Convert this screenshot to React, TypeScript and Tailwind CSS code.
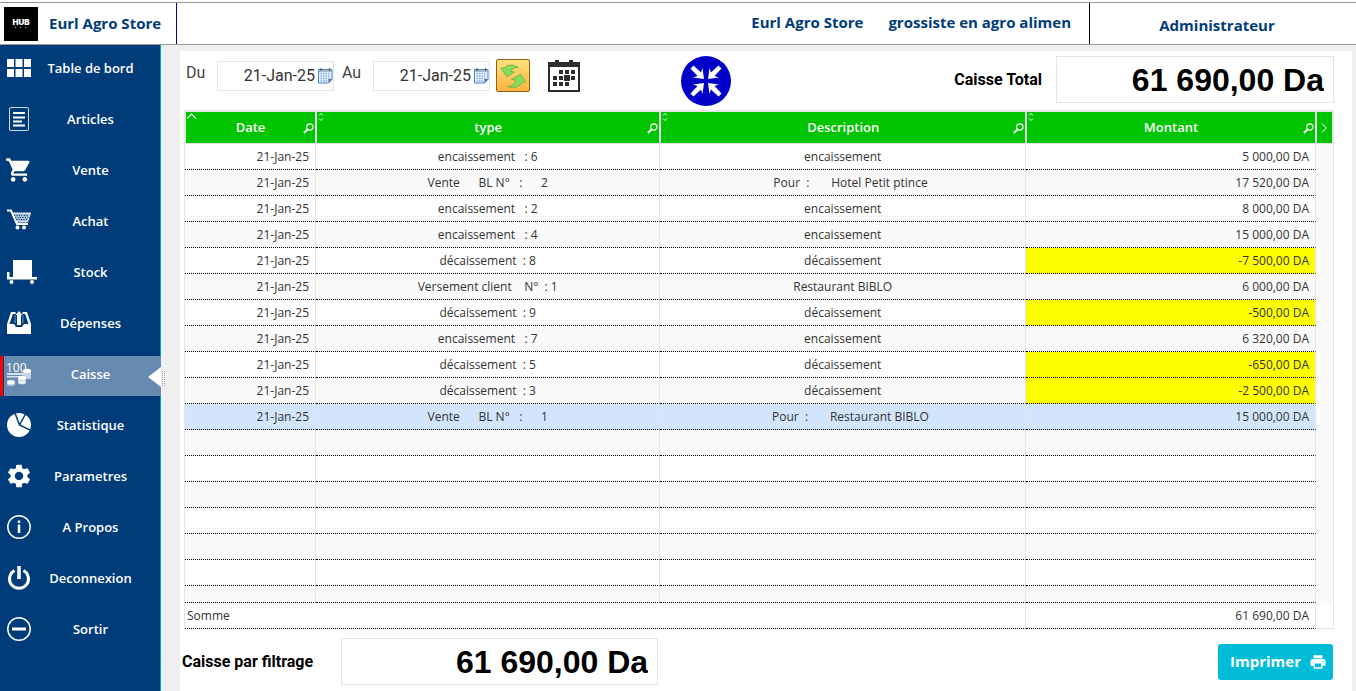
import type { ReactNode } from "react";
import { MdSettings, MdShoppingCart, MdPrint } from "react-icons/md";

type Row = { type: string; description: string; amount: string; negative?: boolean; selected?: boolean };

const rows: Row[] = [
  { type: "encaissement   : 6", description: "encaissement", amount: "5 000,00 DA" },
  { type: "Vente      BL N°   :      2", description: "     Pour  :       Hotel Petit ptince", amount: "17 520,00 DA" },
  { type: "encaissement   : 2", description: "encaissement", amount: "8 000,00 DA" },
  { type: "encaissement   : 4", description: "encaissement", amount: "15 000,00 DA" },
  { type: "décaissement  : 8", description: "décaissement", amount: "-7 500,00 DA", negative: true },
  { type: "Versement client    N°  : 1", description: "Restaurant BIBLO", amount: "6 000,00 DA" },
  { type: "décaissement  : 9", description: "décaissement", amount: "-500,00 DA", negative: true },
  { type: "encaissement   : 7", description: "encaissement", amount: "6 320,00 DA" },
  { type: "décaissement  : 5", description: "décaissement", amount: "-650,00 DA", negative: true },
  { type: "décaissement  : 3", description: "décaissement", amount: "-2 500,00 DA", negative: true },
  { type: "Vente      BL N°   :      1", description: "     Pour  :       Restaurant BIBLO", amount: "15 000,00 DA", selected: true },
];

const emptyRows = [0, 1, 2, 3, 4, 5];

function GridIcon() {
  return (
    <svg width="24" height="24" viewBox="0 0 24 24" fill="#fff">
      <path d="M0 3h7v8H0zM8.500 3h7v8h-7zM17 3h7v8h-7zM0 13h7v8H0zM8.500 13h7v8h-7zM17 13h7v8h-7z" />
    </svg>
  );
}

function ArticleIcon() {
  return (
    <svg width="24" height="24" viewBox="0 0 24 24" fill="none" stroke="#fff">
      <rect x="2.500" y="0.500" width="19" height="23" rx="1.500" strokeOpacity="0.8" />
      <path d="M6 6h12M6 10.500h12M6 14.500h9M6 18.500h12" strokeWidth="2" />
    </svg>
  );
}

function BasketIcon() {
  return (
    <svg width="24" height="24" viewBox="0 0 24 24" fill="none" stroke="#fff">
      <path d="M0 1.500h4l6 13.500h11" strokeWidth="2" />
      <path d="M5 4h18.500l-3 9H9z" fill="#fff" fillOpacity="0.65" strokeOpacity="0.9" />
      <path d="M7 6.500h15M8 8.500h14M9 10.500h12" stroke="#003c79" strokeDasharray="1 1.500" />
      <circle cx="10.500" cy="18.500" r="2" fill="#fff" stroke="none" />
      <circle cx="17" cy="18.500" r="2" fill="#fff" stroke="none" />
    </svg>
  );
}

function TrolleyIcon() {
  return (
    <svg width="30" height="24" viewBox="0 0 30 24" fill="#fff">
      <path d="M6 0h19v17H6z" />
      <path d="M0 12h2.500v5H30v2.500H0z" />
      <circle cx="4.500" cy="22" r="2" />
      <circle cx="25" cy="22" r="2" />
    </svg>
  );
}

function TrayIcon() {
  return (
    <svg width="24" height="24" viewBox="0 0 24 24" fill="#fff">
      <path d="M4 1h4.500v2H5.800L2.500 13H7l2 3h6l2-3h4.500L18.200 3H15.500V1H20l4 12v10H0V13z" />
      <path d="M12 0l3.500 4H14v10h-4V4H8.500z" />
      <path d="M7.500 4H9v8H7zM15 4h1.500l.5 8h-2z" opacity="0.25" />
    </svg>
  );
}

function CoinsIcon() {
  return (
    <svg width="26" height="26" viewBox="0 0 26 26" fill="#fff" className="overflow-visible">
      <text x="-1" y="11" fontSize="12" className="font-['Open_Sans',sans-serif] font-normal">100</text>
      <path d="M0 12h16v2H0zM0 15h13v1.500H0z" opacity="0.75" />
      <path d="M16 10h8v8h-8z" opacity="0.6" />
      <ellipse cx="20" cy="10" rx="4" ry="2.200" />
      <path d="M11 17h8v4.500h-8z" opacity="0.6" />
      <ellipse cx="15" cy="17" rx="4" ry="2.200" />
      <ellipse cx="15" cy="21.500" rx="4" ry="1.800" opacity="0.8" />
      <ellipse cx="4" cy="22.500" rx="4" ry="2.500" opacity="0.6" />
      <ellipse cx="4" cy="21" rx="4" ry="2" />
    </svg>
  );
}

function PieIcon() {
  return (
    <svg width="24" height="24" viewBox="0 0 24 24">
      <circle cx="12" cy="12" r="12" fill="#fff" />
      <path d="M8 0l4.500 12L24 17.500M12.500 12L18.500 1" stroke="#003c79" strokeWidth="1.500" fill="none" />
    </svg>
  );
}

function InfoIcon() {
  return (
    <svg width="24" height="24" viewBox="0 0 24 24" fill="none" stroke="#fff">
      <circle cx="12" cy="12" r="11.200" strokeWidth="1.500" />
      <path d="M12 9.500V18M12 5.500v2.500" strokeWidth="2.500" />
    </svg>
  );
}

function PowerIcon() {
  return (
    <svg width="24" height="24" viewBox="0 0 24 24" fill="none" stroke="#fff" strokeWidth="3">
      <path d="M7.500 4.500a9.500 9.500 0 1 0 9 0" />
      <path d="M12 0v13" strokeWidth="3.500" />
    </svg>
  );
}

function MinusIcon() {
  return (
    <svg width="24" height="24" viewBox="0 0 24 24" fill="none" stroke="#fff">
      <circle cx="12" cy="12" r="11.200" strokeWidth="1.500" />
      <path d="M5 12h14" strokeWidth="3" />
    </svg>
  );
}

const menu: { label: string; icon: ReactNode; active?: boolean }[] = [
  { label: "Table de bord", icon: <GridIcon /> },
  { label: "Articles", icon: <ArticleIcon /> },
  { label: "Vente", icon: <MdShoppingCart className="-ml-0.5 size-7" /> },
  { label: "Achat", icon: <BasketIcon /> },
  { label: "Stock", icon: <TrolleyIcon /> },
  { label: "Dépenses", icon: <TrayIcon /> },
  { label: "Caisse", icon: <CoinsIcon />, active: true },
  { label: "Statistique", icon: <PieIcon /> },
  { label: "Parametres", icon: <MdSettings className="-ml-0.5 size-7" /> },
  { label: "A Propos", icon: <InfoIcon /> },
  { label: "Deconnexion", icon: <PowerIcon /> },
  { label: "Sortir", icon: <MinusIcon /> },
];

function SmallCalendarIcon() {
  return (
    <svg width="15" height="17" viewBox="0 0 15 17" fill="none">
      <path d="M.5 2.500h13.500v10L10.500 16H.5z" fill="#eaf3fd" stroke="#4484bd" />
      <path d="M1 4h12.500" stroke="#6c7f93" />
      <path d="M3 1v3M11.500 1v3" stroke="#555" />
      <path d="M2.500 6.500h10M2.500 9h10M2.500 11.500h10M2.500 14h7" stroke="#7ba9ea" strokeWidth="1.300" strokeDasharray="1.500 1" />
      <path d="M10.500 16v-4H14z" fill="#3b6f9e" />
    </svg>
  );
}

function RefreshIcon() {
  return (
    <svg width="28" height="28" viewBox="0 0 28 28" stroke="#4aa53a" strokeWidth="0.600" fill="#86dc5c">
      <path d="M2 6.500L6 5.500C9 2.500 14 2 19.500 5.500C16 5 13.500 6.500 12 9.500L15.500 10L8 15z" />
      <path d="M26.500 20L23 21C19.500 25.500 13.500 27 8.500 24.500C13 24.500 16 22 17 18L12.500 17.500L21.500 12z" />
    </svg>
  );
}

function CalendarIcon() {
  return (
    <svg width="32" height="32" viewBox="0 0 32 32" fill="#2d2d2d">
      <path d="M0 2h32v30H0zM2 7v23h28V7z" fillRule="evenodd" />
      <path d="M7 0h4v6H7zM21 0h4v6h-4z" />
      <path d="M11 10h4v4h-4zM17 10h4v4h-4zM23 10h4v4h-4zM5 16h4v4H5zM11 16h4v4h-4zM16 15h6v6h-6zM23 16h4v4h-4zM5 22h4v4H5zM11 22h4v4h-4zM17 22h4v4h-4z" />
    </svg>
  );
}

function CollapseIcon() {
  return (
    <svg width="50" height="50" viewBox="0 0 50 50">
      <circle cx="25" cy="25" r="25" fill="#0000c8" />
      <g fill="#fff">
        {["rotate(0 25 25)", "rotate(90 25 25)", "rotate(180 25 25)", "rotate(270 25 25)"].map((turn) => (
          <path key={turn} transform={turn} d="M9.500 12.500l3-3 7.500 7 1.500-4.500 1.500 11-11-1.500 4.500-1.500z" />
        ))}
      </g>
    </svg>
  );
}

function SearchIcon() {
  return (
    <svg width="11" height="11" viewBox="0 0 11 11" fill="none" stroke="#fff">
      <circle cx="6.800" cy="4" r="3.200" strokeWidth="1.200" />
      <path d="M4.500 6.500L0.800 10" strokeWidth="1.800" />
    </svg>
  );
}

function HeaderCell({ label, sorted }: { label: string; sorted?: boolean }) {
  return (
    <th className="relative h-[34px] border-x border-t-2 border-b border-[#e5e5e5] bg-[#00c400] p-0 text-[13px] font-semibold text-white">
      <span>{label}</span>
      <button type="button" aria-label={`Trier ${label}`} className="absolute top-0 left-0 flex p-px">
        {sorted ? (
          <svg width="10" height="7" viewBox="0 0 10 7" fill="none" stroke="#fff" strokeWidth="1.200">
            <path d="M0 5.500L4.500 1L9 5.500" />
          </svg>
        ) : (
          <svg width="6" height="8" viewBox="0 0 6 8" fill="none" stroke="#fff" strokeWidth="0.900">
            <path d="M1 2.500L3 .5l2 2M1 5.500l2 2 2-2" />
          </svg>
        )}
      </button>
      <button type="button" aria-label={`Rechercher ${label}`} className="absolute right-px bottom-[9px] flex">
        <SearchIcon />
      </button>
    </th>
  );
}

function DateField({ id, label }: { id: string; label: string }) {
  return (
    <div className="flex items-center">
      <label htmlFor={id} className="w-[31px] pb-1.5 text-[#444]">{label}</label>
      <div className="flex h-[30px] w-[117px] items-center border border-[#e5e5e5]">
        <input id={id} type="text" defaultValue="21-Jan-25" className="min-w-0 flex-1 text-right text-[#333] outline-none" />
        <button type="button" aria-label={`Choisir ${label}`} className="ml-[3px] flex">
          <SmallCalendarIcon />
        </button>
      </div>
    </div>
  );
}

function Total({ id, label, className }: { id: string; label: string; className: string }) {
  return (
    <>
      <label htmlFor={id} className="shrink-0 font-bold text-black">{label}</label>
      <input
        id={id}
        type="text"
        readOnly
        value="61 690,00 Da"
        className={`h-[47px] border border-[#e5e5e5] pr-[9px] text-right font-['Liberation_Sans',sans-serif] text-[32px] font-bold text-black outline-none ${className}`}
      />
    </>
  );
}

const cell = "h-[26px] border-r border-b border-r-[#e5e5e5] [border-bottom-style:dotted] border-b-black p-0 whitespace-pre";

export default function App() {
  return (
    <div className="flex min-h-screen flex-col bg-[#efefef] font-['Open_Sans','Noto_Sans',sans-serif] text-[#333]">
      <header className="bg-white pt-0.5">
        <div className="flex h-[43px] border-y border-[#999] text-[15px] font-bold text-[#003c79]">
          <div className="flex w-[177px] items-center border-r border-[#0000b4] pl-1">
            <div className="flex size-[34px] flex-col items-center justify-center bg-black text-white">
              <span className="font-['Inter',sans-serif] text-[8px] leading-2 font-black">HUB</span>
              <svg width="14" height="3" viewBox="0 0 14 3" fill="#bbb">
                <path d="M1 1h1v1H1zM6 1h1v1H6zM11 1h1v1h-1z" />
              </svg>
            </div>
            <span className="pl-[11px]">Eurl Agro Store</span>
          </div>
          <div className="flex flex-1 items-center justify-end gap-[25px] border-r border-black pr-[18px] pb-0.5">
            <span>Eurl Agro Store</span>
            <span>grossiste en agro alimen</span>
          </div>
          <div className="flex w-[266px] items-center justify-center pt-1 pr-3">Administrateur</div>
        </div>
      </header>

      <div className="flex flex-1">
        <nav className="flex w-[161px] shrink-0 flex-col gap-[11px] border-r border-[#00a5a5] bg-[#003c79] pt-[5px] text-white">
          {menu.map((item) => (
            <a
              key={item.label}
              href="#"
              className={`relative -mr-px flex h-10 items-center text-[13px] font-semibold ${item.active ? "ml-1 bg-[#668ab0] pl-[3px]" : "pl-[7px]"}`}
            >
              {item.active && <span className="absolute inset-y-0 -left-1 w-[3px] bg-[#ff0000]" />}
              <span className="w-[30px] shrink-0 pb-1">{item.icon}</span>
              <span className="w-[107px] pb-0.5 text-center">{item.label}</span>
              {item.active && (
                <svg width="18" height="20" viewBox="0 0 18 20" className="absolute top-[11px] -right-[5px]">
                  <path d="M0 10L13 0v20z" fill="#fff" />
                  <path d="M14.500 4v15M16.500 4v15" stroke="#aaa" strokeDasharray="1 1" />
                </svg>
              )}
            </a>
          ))}
        </nav>

        <main className="mt-1.5 mr-1 ml-[19px] flex-1 bg-white pr-[18px] pl-1">
          <div className="flex h-[59px] items-center pl-0.5 font-['Roboto',sans-serif] text-base">
            <div className="flex items-center pb-2.5">
              <DateField id="du" label="Du" />
              <div className="w-2" />
              <DateField id="au" label="Au" />
              <button type="button" aria-label="Actualiser" className="ml-1.5 flex h-[33px] w-[34px] items-center justify-center rounded-xs border border-[#8a6414] bg-gradient-to-b from-[#ffe07a] to-[#ffb23e]">
                <RefreshIcon />
              </button>
              <button type="button" aria-label="Calendrier" className="ml-[18px]">
                <CalendarIcon />
              </button>
            </div>
            <button type="button" aria-label="Réduire" className="ml-[101px]">
              <CollapseIcon />
            </button>
            <div className="ml-auto flex items-center gap-3.5 pb-0.5">
              <Total id="total" label="Caisse Total" className="w-[278px]" />
            </div>
          </div>

          <table className="w-full table-fixed border-separate border-spacing-0 border-x border-[#e5e5e5] text-xs">
            <colgroup>
              <col className="w-[131px]" />
              <col className="w-[30%]" />
              <col />
              <col className="w-[290px]" />
              <col className="w-[17px]" />
            </colgroup>
            <thead>
              <tr>
                <HeaderCell label="Date" sorted />
                <HeaderCell label="type" />
                <HeaderCell label="Description" />
                <HeaderCell label="Montant" />
                <th className="border-x border-t-2 border-b border-[#e5e5e5] bg-[#00c400] p-0">
                  <button type="button" aria-label="Suite" className="flex w-full justify-center">
                    <svg width="7" height="10" viewBox="0 0 7 10" fill="none" stroke="#fff">
                      <path d="M1 .5L5.500 5L1 9.500" />
                    </svg>
                  </button>
                </th>
              </tr>
            </thead>
            <tbody>
              {rows.map((row, i) => (
                <tr key={i} className={row.selected ? "bg-[#d2e5fd]" : i % 2 ? "bg-[#fafafa]" : "bg-white"}>
                  <td className={`${cell} pr-1.5 text-right`}>21-Jan-25</td>
                  <td className={`${cell} text-center`}>{row.type}</td>
                  <td className={`${cell} text-center`}>{row.description}</td>
                  <td className={`${cell} pr-1.5 text-right ${row.negative ? "bg-[#ffff00]" : ""}`}>{row.amount}</td>
                  {i === 0 && <td rowSpan={18} className="bg-[#fafafa] p-0" />}
                </tr>
              ))}
              {emptyRows.map((n) => (
                <tr key={n} className={n % 2 ? "bg-white" : "bg-[#fafafa]"}>
                  <td className={cell} />
                  <td className={cell} />
                  <td className={cell} />
                  <td className={cell} />
                </tr>
              ))}
              <tr className="bg-[#fafafa]">
                {[0, 1, 2, 3].map((n) => (
                  <td key={n} className="h-[17px] border-r border-b border-r-[#e5e5e5] [border-bottom-style:dotted] border-b-black p-0" />
                ))}
              </tr>
            </tbody>
            <tfoot>
              <tr>
                <td colSpan={3} className={`${cell} pl-0.5`}>Somme</td>
                <td className={`${cell} pr-1.5 text-right`}>61 690,00 DA</td>
                <td className="border-b border-[#e5e5e5] p-0" />
              </tr>
            </tfoot>
          </table>

          <div className="-ml-0.5 flex items-center pt-[9px] pb-1 font-['Roboto',sans-serif]">
            <div className="flex items-center gap-7">
              <Total id="filtre" label="Caisse par filtrage" className="w-[317px]" />
            </div>
            <button type="button" className="mr-px ml-auto flex h-9 w-[115px] items-center justify-between rounded-[3px] bg-[#00bcd9] pr-1.5 pl-3 font-['Open_Sans',sans-serif] text-[15px] font-bold text-white">
              Imprimer
              <MdPrint className="size-[18px]" />
            </button>
          </div>
        </main>
      </div>
    </div>
  );
}
